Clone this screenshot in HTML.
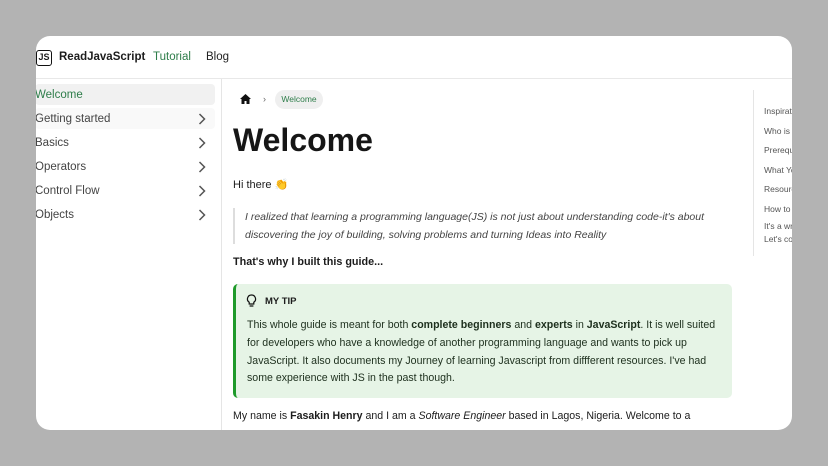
<!DOCTYPE html>
<html><head><meta charset="utf-8"><style>
*{margin:0;padding:0;box-sizing:border-box}
body{width:828px;height:466px;background:#b3b3b3;font-family:"Liberation Sans","DejaVu Sans",sans-serif;position:relative;overflow:hidden;color:#1c1c1c}
.card{position:absolute;left:36px;top:36px;width:756px;height:394px;background:#fff;border-radius:14px;overflow:hidden}
.hdr{position:absolute;left:0;top:0;width:756px;height:43px;border-bottom:1px solid #e8e8e8}
.abs{position:absolute;white-space:nowrap}
.side{position:absolute;left:0;top:43px;width:186px;height:351px;border-right:1px solid #e5e5e5}
.it{position:absolute;left:-1px;width:180px;height:21px;font-size:11.5px;line-height:23px;color:#444;border-radius:4px}
.it svg{position:absolute;right:9px;top:5px}
p{font-size:11.5px}
</style></head><body>
<div class="card">
 <div class="hdr">
  <div class="abs" style="left:0;top:14px;width:16px;height:16px;border:1.5px solid #111;border-radius:3px;font-size:9px;font-weight:bold;line-height:13px;text-align:center">JS</div>
  <div class="abs" style="left:23px;top:15px;font-size:11.5px;font-weight:bold">ReadJavaScript</div>
  <div class="abs" style="left:117px;top:15px;font-size:11.5px;color:#2e7d4a">Tutorial</div>
  <div class="abs" style="left:170px;top:15px;font-size:11.5px;color:#222">Blog</div>
 </div>
 <div class="side">
  <div class="it" style="top:5px;background:#f1f1f1;color:#2e7d4a">Welcome</div>
  <div class="it" style="top:29px;background:#f9f9f9">Getting started<svg width="8" height="12" viewBox="0 0 8 12"><path d="M1.5 1l5 5-5 5" fill="none" stroke="#555" stroke-width="1.5"/></svg></div>
  <div class="it" style="top:53px">Basics<svg width="8" height="12" viewBox="0 0 8 12"><path d="M1.5 1l5 5-5 5" fill="none" stroke="#555" stroke-width="1.5"/></svg></div>
  <div class="it" style="top:77px">Operators<svg width="8" height="12" viewBox="0 0 8 12"><path d="M1.5 1l5 5-5 5" fill="none" stroke="#555" stroke-width="1.5"/></svg></div>
  <div class="it" style="top:101px">Control Flow<svg width="8" height="12" viewBox="0 0 8 12"><path d="M1.5 1l5 5-5 5" fill="none" stroke="#555" stroke-width="1.5"/></svg></div>
  <div class="it" style="top:125px">Objects<svg width="8" height="12" viewBox="0 0 8 12"><path d="M1.5 1l5 5-5 5" fill="none" stroke="#555" stroke-width="1.5"/></svg></div>
 </div>
 <svg class="abs" style="left:204px;top:58px" width="11" height="10" viewBox="0 0 11 10"><path d="M5.5 0L0 5h1.5v5h3V7h2v3h3V5H11z" fill="#111"/></svg>
 <div class="abs" style="left:227px;top:58px;font-size:9px;color:#666">›</div>
 <div class="abs" style="left:239px;top:54px;width:48px;height:19px;border-radius:10px;background:#efefef;font-size:8.5px;color:#2e7d4a;line-height:19px;text-align:center">Welcome</div>
 <div class="abs" style="left:197px;top:86px;font-size:32px;font-weight:bold;color:#161616">Welcome</div>
 <p class="abs" style="left:197px;top:142px;font-size:11px">Hi there 👏</p>
 <div class="abs" style="left:197px;top:172px;height:36px;border-left:2px solid #ddd;padding-left:10px;font-size:10.5px;font-style:italic;color:#444;line-height:18px">I realized that learning a programming language(JS) is not just about understanding code-it's about<br>discovering the joy of building, solving problems and turning Ideas into Reality</div>
 <p class="abs" style="left:197px;top:220px;font-weight:bold;font-size:10.8px">That's why I built this guide...</p>
 <div class="abs" style="left:197px;top:248px;width:499px;height:114px;background:#e6f4e6;border-left:3px solid #1e9a2a;border-radius:5px"></div>
 <svg class="abs" style="left:210px;top:258px" width="11" height="14" viewBox="0 0 11 14"><path d="M5.5 1a4 4 0 0 0-2.3 7.3V10h4.6V8.3A4 4 0 0 0 5.5 1zM3.6 12h3.8" fill="none" stroke="#111" stroke-width="1.2"/></svg>
 <div class="abs" style="left:229px;top:260px;font-size:9.5px;font-weight:bold">MY TIP</div>
 <div class="abs" style="left:211px;top:281px;font-size:10.6px;line-height:17.8px;color:#1d2f1d">This whole guide is meant for both <b>complete beginners</b> and <b>experts</b> in <b>JavaScript</b>. It is well suited<br>for developers who have a knowledge of another programming language and wants to pick up<br>JavaScript. It also documents my Journey of learning Javascript from diffferent resources. I've had<br>some experience with JS in the past though.</div>
 <p class="abs" style="left:197px;top:374px;font-size:10.6px">My name is <b>Fasakin Henry</b> and I am a <i>Software Engineer</i> based in Lagos, Nigeria. Welcome to a</p>
 <div class="abs" style="left:717px;top:54px;width:1px;height:166px;background:#e5e5e5"></div>
 <div class="abs" style="left:728px;top:66px;font-size:8.5px;color:#555;line-height:19.6px">Inspiration<br>Who is this<br>Prerequisites<br>What You'll<br>Resources<br>How to</div>
 <div class="abs" style="left:728px;top:184px;font-size:8.5px;color:#555;line-height:13px">It's a wrap<br>Let's connect</div>
</div>
</body></html>
